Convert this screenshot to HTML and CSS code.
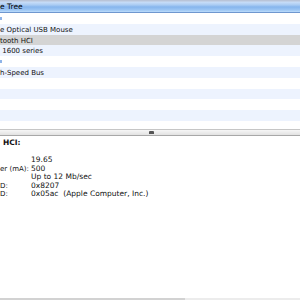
FILE: index.html
```html
<!DOCTYPE html>
<html lang="en">
<head>
  <meta charset="UTF-8">
  <title>System Profiler</title>
  <link rel="stylesheet" href="styles.css">
</head>
<body>

  <div class="window">

    <!-- Device tree -->
    <div class="tree">
      <div class="tree-header">e Tree</div>
      <div class="rows">
        <div class="row"><span class="twisty"></span></div>
        <div class="row">e Optical USB Mouse</div>
        <div class="row selected">tooth HCI</div>
        <div class="row">&nbsp;1600 series</div>
        <div class="row"><span class="twisty"></span></div>
        <div class="row">h-Speed Bus</div>
        <div class="row"></div>
        <div class="row"></div>
        <div class="row"></div>
        <div class="row"></div>
        <div class="row"></div>
      </div>
    </div>

    <!-- Splitter -->
    <div class="splitter"><span class="grip"></span></div>

    <!-- Details -->
    <div class="details">
      <div class="details-title">HCI:</div>
      <div class="props">
        <span class="label"></span><span class="value">&nbsp;</span>
        <span class="label"></span><span class="value">19.65</span>
        <span class="label">er (mA):</span><span class="value">500</span>
        <span class="label"></span><span class="value">Up to 12 Mb/sec</span>
        <span class="label">D:</span><span class="value">0x8207</span>
        <span class="label">D:</span><span class="value">0x05ac&nbsp; (Apple Computer, Inc.)</span>
      </div>
    </div>

    <div class="hscroll"><span class="thumb"></span></div>
  </div>

</body>
</html>
```

FILE: styles.css
```css
* {
  margin: 0;
  padding: 0;
  box-sizing: border-box;
}

body {
  font-family: 'DejaVu Sans', 'Liberation Sans', sans-serif;
  font-size: 7.5px;
  color: #111;
  background: #fff;
  width: 300px;
  height: 300px;
  overflow: hidden;
}

.window {
  display: flex;
  flex-direction: column;
  height: 300px;
}

/* Device tree */
.tree {
  height: 129px;
  overflow: hidden;
  flex-shrink: 0;
}

.tree-header {
  height: 13px;
  line-height: 12px;
  padding-top: 1px;
  font-size: 7.5px;
  color: #000;
  background: linear-gradient(to bottom,
    #b9c4d8 0px, #b9c4d8 1px,
    #c9def8 2px, #a9cbf3 5px,
    #86b5ed 7px, #9cc6f4 10px,
    #bcdcfb 12px);
  border-bottom: 1px solid #6f97cf;
}

.row {
  height: 10.8px;
  line-height: 10.8px;
  padding-top: 1px;
  font-size: 7px;
  white-space: nowrap;
  position: relative;
}

.row:nth-child(even) {
  background: #edf3fe;
}

.row.selected {
  background: #d4d4d4;
}

.twisty {
  position: absolute;
  left: 0;
  top: 4px;
  width: 2px;
  height: 3px;
  background: #8fb4e8;
}

/* Splitter */
.splitter {
  height: 7px;
  flex-shrink: 0;
  background: linear-gradient(to bottom, #f6f6f6, #e2e2e2);
  border-top: 1px solid #c6c6c6;
  border-bottom: 1px solid #a8a8a8;
  display: flex;
  justify-content: center;
  align-items: center;
}

.grip {
  width: 5px;
  height: 3px;
  margin-left: 2px;
  background: #555;
  border-radius: 1px 1px 0 0;
}

/* Details */
.details {
  flex: 1;
  padding-top: 3px;
  line-height: 8.5px;
}

.details-title {
  font-weight: bold;
  padding-left: 3px;
}

.props {
  display: grid;
  grid-template-columns: 31px 1fr;
}

.label,
.value {
  white-space: nowrap;
}

.label {
  font-size: 7px;
}

.hscroll {
  height: 2px;
  flex-shrink: 0;
  background: #ececec;
  display: flex;
}

.thumb {
  width: 185px;
  background: #d2d2d2;
}
```
